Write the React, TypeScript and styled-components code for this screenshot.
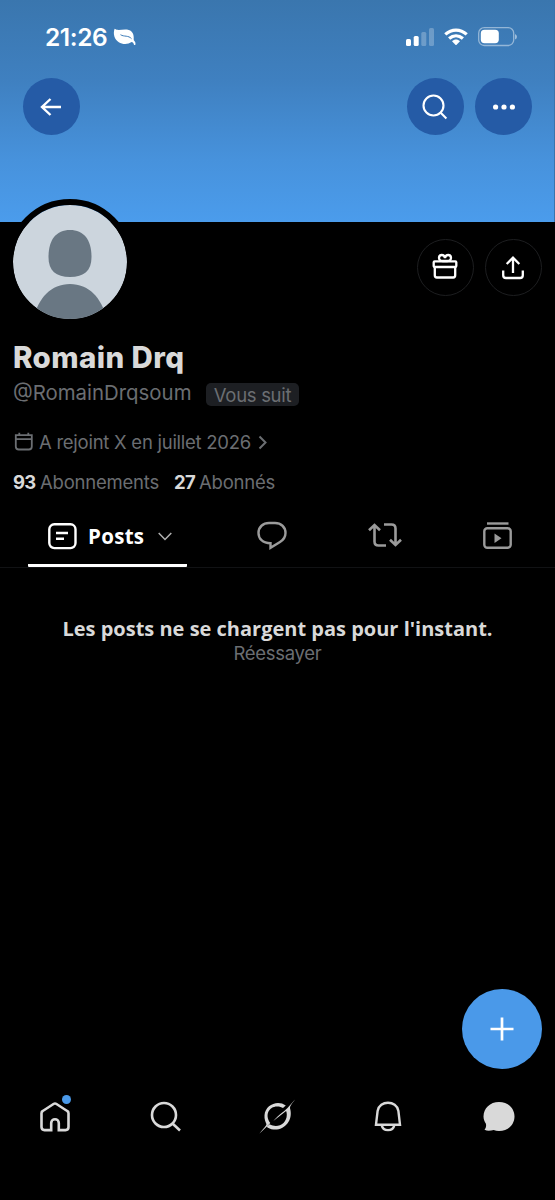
import React from "react";
import styled, { createGlobalStyle } from "styled-components";

const GlobalStyle = createGlobalStyle`
  * { box-sizing: border-box; }
  body { margin: 0; background: #000; font-family: Inter, "Liberation Sans", sans-serif; }
  button { appearance: none; border: 0; padding: 0; margin: 0; background: none; font: inherit; color: inherit; }
  svg { display: block; flex: none; overflow: visible; }
  h1, h2, p { margin: 0; }
`;

const Screen = styled.main`
  width: 555px;
  height: 1200px;
  display: flex;
  flex-direction: column;
  overflow: hidden;
  background: #000;
  color: #d9d9d9;
`;

const Banner = styled.header`
  flex: none;
  height: 222px;
  background: linear-gradient(180deg, #3a76ae 0%, #3f80c0 36%, #4792dc 72%, #4b9cec 100%);
  border-right: 1px solid #3a73ab;
`;

const StatusBar = styled.div`
  height: 78px;
  padding: 22px 37px 0 45px;
  display: flex;
  align-items: flex-start;
  color: #fff;
`;

const Clock = styled.span`
  font-size: 24.5px;
  line-height: 31px;
  font-weight: 600;
  width: 68px;
  letter-spacing: -0.4px;
`;

const StatusIcons = styled.div`
  margin-left: auto;
  padding-top: 5px;
  display: flex;
  gap: 10px;
`;

const LeafWrap = styled.span`
  padding-top: 6px;
`;

const TopActions = styled.nav`
  display: flex;
  gap: 11px;
  padding: 0 22px 0 23px;
`;

const RoundButton = styled.button<{ $outlined?: boolean; $push?: boolean }>`
  width: 57px;
  height: 57px;
  border-radius: 50%;
  display: grid;
  place-items: center;
  color: #fff;
  background: ${(p) => (p.$outlined ? "transparent" : "#255ba6")};
  border: ${(p) => (p.$outlined ? "1.5px solid #1d1e20" : "0")};
  margin-left: ${(p) => (p.$push ? "auto" : "0")};
`;

const ProfileTop = styled.div`
  display: flex;
  height: 119px;
  padding: 0 13px 0 7px;
`;

const Avatar = styled.div`
  width: 126px;
  height: 126px;
  margin-top: -23.5px;
  border: 6px solid #000;
  border-radius: 50%;
  overflow: hidden;
  background: #ccd5dd;
  background-clip: padding-box;
  position: relative;
`;

const ProfileActions = styled.div`
  display: flex;
  gap: 11px;
  margin-left: auto;
  padding-top: 17px;
`;

const Info = styled.section`
  padding: 0 13px;
  height: 161px;
`;

const Name = styled.h1`
  font-size: 29.5px;
  line-height: 33px;
  font-weight: 800;
  letter-spacing: 0.4px;
`;

const HandleRow = styled.div`
  display: flex;
  align-items: flex-start;
  gap: 15px;
  height: 35px;
  padding-top: 4px;
  color: #6b6e72;
`;

const Handle = styled.span`
  width: 178px;
  white-space: nowrap;
  font-size: 20.4px;
  line-height: 30px;
  font-weight: 400;
`;

const FollowsYou = styled.span`
  margin-top: 5px;
  width: 93px;
  height: 23px;
  border-radius: 5px;
  background: #1d1f23;
  text-align: center;
  white-space: nowrap;
  font-size: 18.5px;
  letter-spacing: -0.3px;
  line-height: 24px;
  font-weight: 400;
`;

const Joined = styled.div`
  display: flex;
  align-items: center;
  margin-top: 18px;
  height: 30px;
  color: #6b6e72;
  font-size: 18.5px;
  letter-spacing: -0.26px;
  font-weight: 400;
`;

const JoinedText = styled.span`
  flex: none;
  width: 225px;
  padding-left: 6px;
  white-space: nowrap;
`;

const Counts = styled.div`
  display: flex;
  margin-top: 11px;
  line-height: 29px;
  font-size: 18.5px;
  white-space: nowrap;
`;

const CountValue = styled.strong<{ $w: number }>`
  width: ${(p) => p.$w}px;
  font-weight: 700;
  letter-spacing: -0.7px;
`;

const CountLabel = styled.span<{ $w: number }>`
  width: ${(p) => p.$w}px;
  color: #6b6e72;
  font-weight: 400;
  letter-spacing: -0.22px;
`;

const Tabs = styled.nav`
  flex: none;
  height: 66px;
  display: flex;
  border-bottom: 1px solid #111214;
  padding-left: 28px;
  color: #9b9b9b;
`;

const ActiveTab = styled.button`
  width: 159px;
  height: 65px;
  margin-right: 28px;
  padding: 6px 0 0 20px;
  border-bottom: 3px solid #fff;
  border-radius: 1px;
  display: flex;
  align-items: center;
  color: #fff;
`;

const TabLabel = styled.span`
  width: 70px;
  padding-left: 11px;
  box-sizing: content-box;
  text-align: left;
  font-family: "Open Sans", sans-serif;
  font-size: 20.5px;
  letter-spacing: 0.3px;
  font-weight: 700;
  line-height: 28px;
`;

const Tab = styled.button`
  width: 113px;
  height: 66px;
  display: grid;
  place-items: center;
`;

const EmptyState = styled.section`
  flex: 1;
  padding-top: 47px;
  text-align: center;
`;

const EmptyTitle = styled.h2`
  font-family: "Open Sans", sans-serif;
  font-size: 20px;
  line-height: 28px;
  font-weight: 700;
  white-space: nowrap;
`;

const Retry = styled.p`
  color: #6b6e72;
  font-size: 18.5px;
  line-height: 20px;
  font-weight: 400;
  letter-spacing: -0.3px;
`;

const ComposeRow = styled.div`
  display: flex;
  justify-content: flex-end;
  padding-right: 13px;
`;

const Compose = styled.button`
  width: 80px;
  height: 80px;
  border-radius: 50%;
  background: #4a99e9;
  display: grid;
  place-items: center;
`;

const BottomNav = styled.nav`
  flex: none;
  height: 131px;
  padding: 29.5px 1px 0 0;
  display: grid;
  grid-template-columns: repeat(5, 1fr);
  justify-items: center;
  align-items: start;
`;

const NavItem = styled.button`
  position: relative;
  width: 38px;
  height: 38px;
`;

const Dot = styled.i`
  position: absolute;
  top: -3.5px;
  left: 26px;
  width: 9px;
  height: 9px;
  border-radius: 50%;
  background: #4a99e9;
`;

type IconProps = { w: number; h: number; sw?: number; children: React.ReactNode };
const Icon = ({ w, h, sw = 2, children }: IconProps) => (
  <svg width={w} height={h} viewBox={`0 0 ${w} ${h}`} fill="none" stroke="currentColor" strokeWidth={sw}>
    {children}
  </svg>
);

export default function App() {
  return (
    <Screen>
      <GlobalStyle />
      <Banner>
        <StatusBar>
          <Clock>21:26</Clock>
          <LeafWrap>
            <Icon w={24} h={20}>
              <path fill="#fff" stroke="none" d="M1.6.8C5.4 3.2 9 .9 14 1.5c5 .7 7.3 4.5 6.7 9.8-.1.7.2 1.2.7 1.7.9.9 1.3 2.2 1 3.4-.1.9-1.3.9-1.5 0-.3-1.3-1.1-2.1-2.4-2.4-3.3 2.6-9 2.6-12.7.2C1.6 11.6-.3 6 1.6.8Z" />
              <path stroke="#3c7bb8" strokeWidth={1} d="M7.5 6.7c3.500 2.300 8 .4 11 4" />
            </Icon>
          </LeafWrap>
          <StatusIcons>
            <Icon w={28} h={19}>
              <g fill="#fff" stroke="none">
                <rect x="0" y="12" width="5" height="7" rx="1.5" />
                <rect x="7.7" y="9" width="5" height="10" rx="1.5" />
                <rect x="15.3" y="5" width="5" height="14" rx="1.5" opacity=".25" />
                <rect x="23" y="1" width="5" height="18" rx="1.5" opacity=".25" />
              </g>
            </Icon>
            <Icon w={24} h={19} sw={3.2}>
              <path d="M1.3 7.4C7.6 1.6 16.4 1.6 22.7 7.4" />
              <path d="M5.1 11.5c4.2-3.7 9.6-3.7 13.8 0" />
              <path fill="#fff" stroke="none" d="M8 14.3c2.5-2.3 5.5-2.3 8 0l-3.4 3.5q-.6.5-1.2 0Z" />
            </Icon>
            <Icon w={39} h={19}>
              <rect x=".7" y=".7" width="35" height="17.8" rx="5.5" strokeWidth="1.3" opacity=".45" />
              <rect x="2.8" y="2.8" width="18" height="13.5" rx="3.7" fill="#fff" stroke="none" />
              <path d="M37 7v5.5q2-.8 2-2.7t-2-2.8Z" fill="#fff" stroke="none" opacity=".5" />
            </Icon>
          </StatusIcons>
        </StatusBar>
        <TopActions>
          <RoundButton aria-label="Retour">
            <Icon w={23} h={18} sw={2.4}><path d="M10.5 1 2 9l8.5 8M2 9h19" /></Icon>
          </RoundButton>
          <RoundButton $push aria-label="Rechercher">
            <Icon w={27} h={26} sw={2.1}><circle cx="11.5" cy="11.5" r="10" /><path d="m18.7 18.7 5.7 5.7" /></Icon>
          </RoundButton>
          <RoundButton aria-label="Plus">
            <Icon w={22} h={6}><g fill="#fff" stroke="none"><circle cx="2.6" cy="3" r="2.6" /><circle cx="11" cy="3" r="2.6" /><circle cx="19.4" cy="3" r="2.6" /></g></Icon>
          </RoundButton>
        </TopActions>
      </Banner>

      <ProfileTop>
        <Avatar>
          <Icon w={114} h={114}>
            <g fill="#697783" stroke="none">
              <path d="M57 25c-14 0-21.5 10-21.5 27C35.5 66 43 72 57 72s21.5-6 21.5-20C78.5 35 71 25 57 25Z" />
              <path d="M20 115C25 93 38 79 57 79s32 14 37 36Z" />
            </g>
          </Icon>
        </Avatar>
        <ProfileActions>
          <RoundButton $outlined aria-label="Cadeau">
            <Icon w={26} h={27} sw={2.3}>
              <rect x=".7" y="7.3" width="22.6" height="5.7" rx="1" />
              <path d="M1.8 12.8v8.5q0 2.2 2 2.2h16.4q2 0 2-2.2v-8.5" />
              <path d="M12 6.8c-4.5.7-6-.7-6-2.7 0-3.9 5.3-4.4 6 0 .7-4.4 6-3.9 6 0 0 2-1.5 3.4-6 2.7Z" />
            </Icon>
          </RoundButton>
          <RoundButton $outlined aria-label="Partager">
            <Icon w={23} h={24} sw={2.3}><path d="M1.2 14.5v4.7q0 2.8 2.8 2.8h14q2.8 0 2.8-2.8v-4.7M11 17V2M4.7 8 11 1.7 17.3 8" /></Icon>
          </RoundButton>
        </ProfileActions>
      </ProfileTop>

      <Info>
        <Name>Romain Drq</Name>
        <HandleRow>
          <Handle>@RomainDrqsoum</Handle>
          <FollowsYou>Vous suit</FollowsYou>
        </HandleRow>
        <Joined>
          <Icon w={20} h={20} sw={1.8}><path d="M2.8 3.2h16v11.3q0 3-3 3H5.8q-3 0-3-3ZM2.8 7.2h16M6.3.8v2.4M15.3.8v2.4" /></Icon>
          <JoinedText>A rejoint X en juillet 2026</JoinedText>
          <Icon w={9} h={13} sw={2}><path d="m1.5.5 6 6-6 6" /></Icon>
        </Joined>
        <Counts>
          <CountValue $w={27}>93</CountValue>
          <CountLabel $w={134}>Abonnements</CountLabel>
          <CountValue $w={25}>27</CountValue>
          <CountLabel $w={80}>Abonnés</CountLabel>
        </Counts>
      </Info>

      <Tabs>
        <ActiveTab>
          <Icon w={29} h={27} sw={2.4}><rect x="1.3" y="1.3" width="26.2" height="23.8" rx="5" /><path d="M8 10h12M8 15.7h8" /></Icon>
          <TabLabel>Posts</TabLabel>
          <Icon w={14} h={9} sw={1.5}><path d="m.7 1 6.3 6.5L13.3 1" stroke="#b0b0b0" /></Icon>
        </ActiveTab>
        <Tab aria-label="Réponses">
          <Icon w={30} h={28} sw={2.4}><path d="M12 2h6c6 0 10.5 4 10.5 10 0 4.5-2.2 7-5.5 9l-9.5 5.8v-4.5C5.5 22.3 1.5 17.5 1.5 12 1.5 6 6 2 12 2Z" /></Icon>
        </Tab>
        <Tab aria-label="Reposts">
          <Icon w={34} h={26} sw={2.6}><path d="M1 8.3 6.5 3 12 8.3M6.5 3.5v16q0 4 4 4H18M33 17.7 27.5 23 22 17.7M27.5 22.5v-16q0-4-4-4H16" /></Icon>
        </Tab>
        <Tab aria-label="Vidéos">
          <Icon w={29} h={26} sw={2.4}><rect x="1.3" y="6.3" width="26.4" height="19.4" rx="3" /><path d="M4 1.5h21.5" /><path fill="currentColor" stroke="none" d="M11.5 11.5v9.5l7-4.7Z" /></Icon>
        </Tab>
      </Tabs>

      <EmptyState>
        <EmptyTitle>Les posts ne se chargent pas pour l'instant.</EmptyTitle>
        <Retry>Réessayer</Retry>
      </EmptyState>

      <ComposeRow>
        <Compose aria-label="Publier"><svg width="24" height="24" viewBox="0 0 24 24" stroke="#fff" strokeWidth="2.7"><path d="M12 .5v23M.5 12h23" /></svg></Compose>
      </ComposeRow>

      <BottomNav>
        <NavItem aria-label="Accueil">
          <Icon w={38} h={38} sw={2.6}><path d="M5.5 14.2q0-1.5 1.3-2.2L17.5 5q1.5-.9 3 0l10.7 7q1.3.7 1.3 2.2v13.9q0 3-3 3h-6.7V24c0-5-7.6-5-7.6 0v7.1H8.5q-3 0-3-3Z" /></Icon>
          <Dot />
        </NavItem>
        <NavItem aria-label="Rechercher">
          <Icon w={38} h={38} sw={2.6}><circle cx="17" cy="16" r="12" /><path d="m25.5 24.5 7.5 7" /></Icon>
        </NavItem>
        <NavItem aria-label="Grok">
          <Icon w={38} h={38}>
            <g fill="currentColor" stroke="none">
              <path d="M27.8 6.5C19.4.5 7.3 6 6.5 16.2c-.3 4 1 6.6 1.9 8.8C9 26.3 4.5 30.5 1.5 34.5l9-8.6 1.8-2C6.4 16 11 7.3 19.3 7.5c2.3 0 4.2.7 5.7 1.6Z" />
              <path d="M37 .5c-3.300 4.700-5.600 6.500-4.800 9.500 3 11.700-6 21.500-16.600 20.500-3.200-.3-5.200-1.400-7-2.800l3-2.400c8 4.500 17.200-.5 17.200-9.600 0-1.500-.2-2.700-.7-3.700L15.300 22c5.500-6.600 12.500-10.400 15.500-14.500Z" />
            </g>
          </Icon>
        </NavItem>
        <NavItem aria-label="Notifications">
          <Icon w={38} h={38} sw={2.4}><path d="M7 25.7 8.6 12c1.8-11 19-11 20.8 0L31 25.7ZM12.8 26.5c1.2 6.2 11.2 6.2 12.4 0" /></Icon>
        </NavItem>
        <NavItem aria-label="Messages">
          <Icon w={38} h={38}><path fill="currentColor" stroke="none" d="M19 3C28 3 34.500 9.300 34.500 17.500S28 32 19 32c-2 0-3.700-.4-5.300-1-3 .7-6.300 1.300-9.200-.2 1.500-2 2-4 1.300-6.200C4.500 22.500 3.500 20.300 3.500 17.500 3.500 9.300 10 3 19 3Z" /></Icon>
        </NavItem>
      </BottomNav>
    </Screen>
  );
}
